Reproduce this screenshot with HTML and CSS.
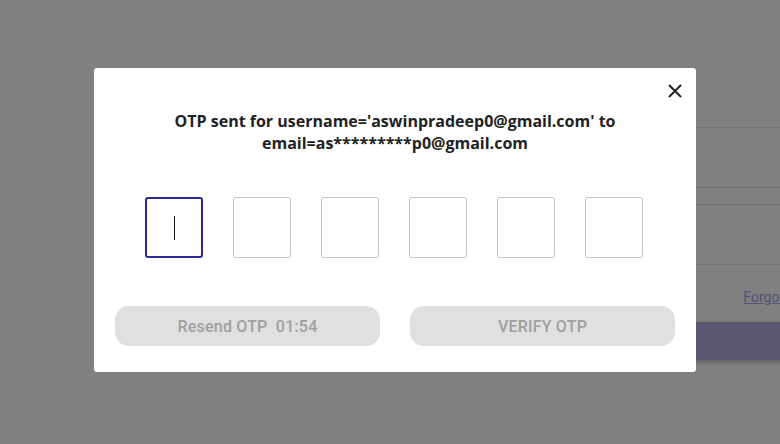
FILE: index.html
```html
<!DOCTYPE html>
<html>
<head>
<meta charset="utf-8">
<link rel="stylesheet" href="styles.css">
</head>
<body>
<div class="page">
  <div class="form">
    <div class="field"></div>
    <div class="field"></div>
    <div class="forgot-row"><span class="forgot">Forgot password?</span></div>
    <div class="login-btn"></div>
  </div>
</div>
<div class="overlay">
  <div class="modal">
    <button class="close" aria-label="close">
      <svg width="14" height="14" viewBox="0 0 14 14"><path d="M1 1L13 13M13 1L1 13" stroke="#222" stroke-width="2" fill="none"/></svg>
    </button>
    <h2 class="title">OTP sent for username='aswinpradeep0@gmail.com' to<br>email=as*********p0@gmail.com</h2>
    <div class="otp">
      <div class="box active"><span class="caret"></span></div>
      <div class="box"></div>
      <div class="box"></div>
      <div class="box"></div>
      <div class="box"></div>
      <div class="box"></div>
    </div>
    <div class="actions">
      <button class="btn">Resend OTP&nbsp; 01:54</button>
      <button class="btn">VERIFY OTP</button>
    </div>
  </div>
</div>
</body>
</html>
```
FILE: styles.css
```css
* { box-sizing: border-box; }
html, body { margin: 0; height: 100%; }
body {
  background: #808080;
  font-family: "Open Sans", "Noto Sans", sans-serif;
  overflow: hidden;
}
.page {
  height: 444px;
  display: flex;
  justify-content: flex-end;
}
.form {
  width: 360px;
  margin-right: -40px;
  padding-top: 127px;
  display: flex;
  flex-direction: column;
}
.field {
  height: 61px;
  border-top: 1px solid #737373;
  border-bottom: 1px solid #737373;
  margin-bottom: 16px;
}
.forgot-row {
  height: 41px;
  display: flex;
  justify-content: flex-end;
  padding-top: 8px;
  overflow: hidden;
}
.forgot {
  font-family: "Roboto", sans-serif;
  font-size: 14px;
  color: #53507a;
  text-decoration: underline;
  white-space: nowrap;
  margin-right: -35px;
}
.login-btn {
  height: 38px;
  background: #5b5670;
  box-shadow: 0 2px 4px rgba(0,0,0,0.25);
}
.overlay {
  position: fixed;
  inset: 0;
  display: flex;
  align-items: flex-start;
  justify-content: flex-start;
  padding: 68px 0 0 94px;
}
.modal {
  position: relative;
  width: 602px;
  height: 304px;
  background: #fff;
  border-radius: 3px;
  padding: 42px 21px 0 21px;
  display: flex;
  flex-direction: column;
  align-items: center;
}
.close {
  position: absolute;
  top: 14px;
  right: 12px;
  width: 18px;
  height: 18px;
  padding: 0;
  border: 0;
  background: transparent;
  display: flex;
  align-items: center;
  justify-content: center;
}
.title {
  margin: 0;
  font-size: 16px;
  font-weight: 700;
  line-height: 22px;
  color: #222;
  text-align: center;
}
.otp {
  display: flex;
  gap: 30px;
  margin-top: 43px;
  margin-left: -2px;
}
.box {
  width: 58px;
  height: 61px;
  border: 1px solid #c4c4c4;
  border-radius: 3px;
  display: flex;
  align-items: center;
  justify-content: center;
}
.box.active {
  border: 2px solid #2b2a9a;
}
.caret {
  width: 1px;
  height: 24px;
  background: #111;
}
.actions {
  display: flex;
  gap: 30px;
  margin-top: 48px;
  width: 100%;
}
.btn {
  flex: 1;
  height: 40px;
  border: 0;
  border-radius: 14px;
  background: #e0e0e0;
  color: #9f9f9f;
  font-family: "Roboto", sans-serif;
  font-weight: 500;
  font-size: 16px;
  letter-spacing: 0.2px;
}
```
